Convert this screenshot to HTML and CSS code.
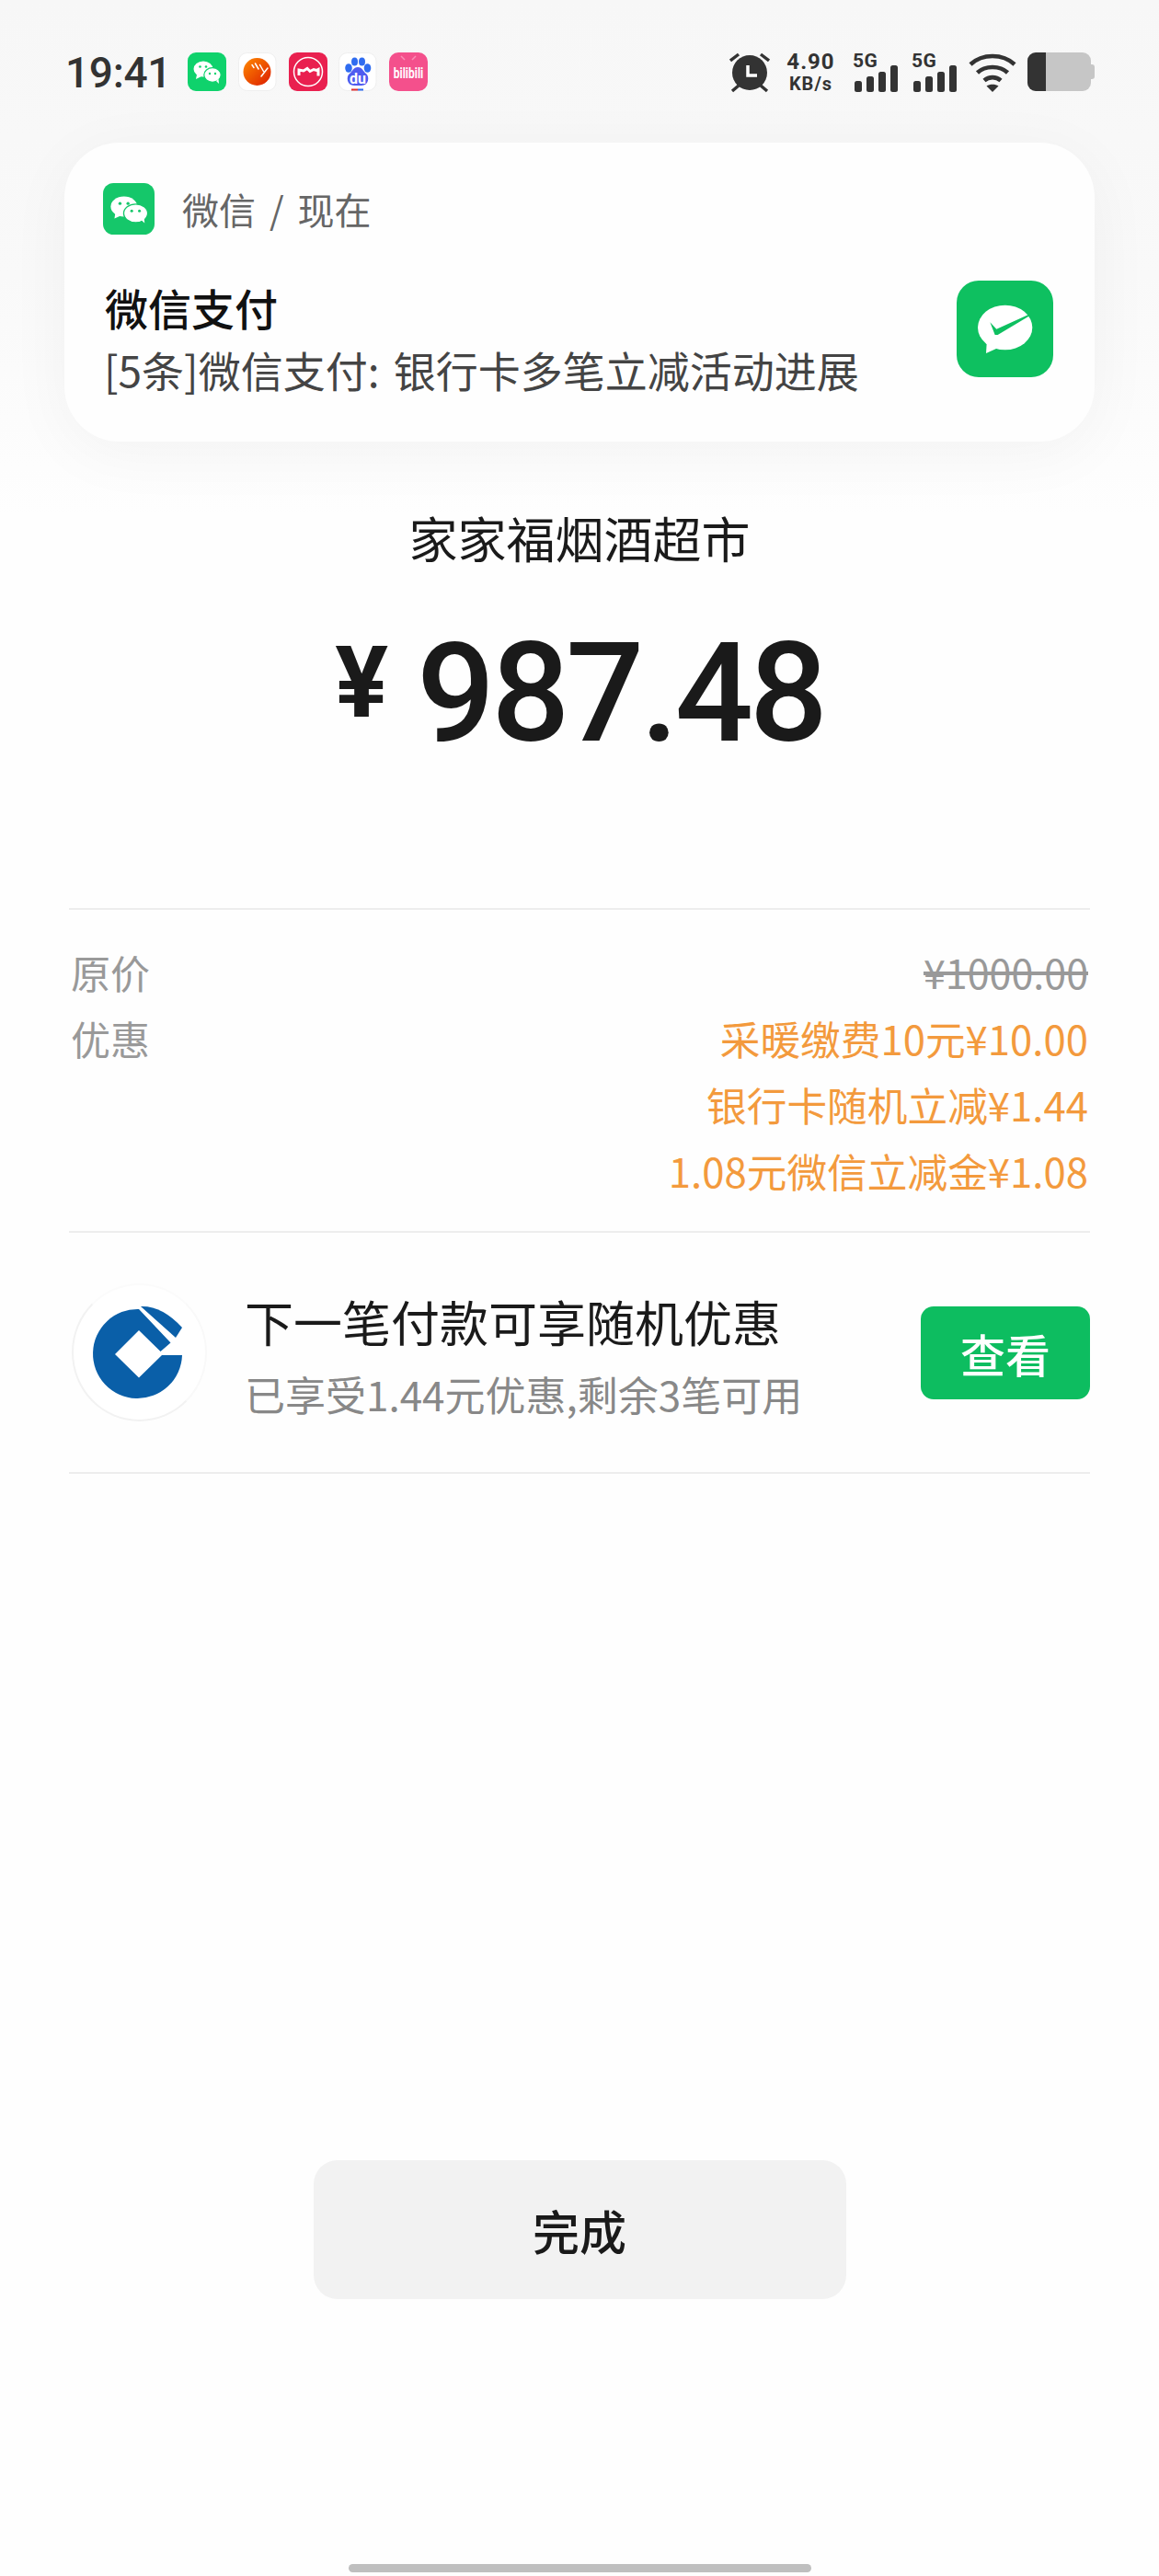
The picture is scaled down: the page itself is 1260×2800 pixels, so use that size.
FILE: index.html
```html
<!DOCTYPE html>
<html lang="zh-CN">
<head>
<meta charset="utf-8">
<title>微信支付</title>
<link rel="stylesheet" href="styles.css">
</head>
<body>
<div class="page">
  <header class="status">
    <div class="time">19:41</div>
    <div class="apps">
      <svg class="app" viewBox="0 0 42 42"><rect width="42" height="42" rx="9" fill="#0fd26c"/><ellipse cx="17" cy="18" rx="10.500" ry="8.600" fill="#fff"/><path d="M10 24l-1 5 6-3z" fill="#fff"/><ellipse cx="27" cy="24.500" rx="9.200" ry="7.800" fill="#fff" stroke="#0fd26c" stroke-width="1.200"/><path d="M31 31l3 3-.5-5z" fill="#fff"/><circle cx="13.500" cy="15.500" r="1.300" fill="#0fd26c"/><circle cx="20" cy="15.500" r="1.300" fill="#0fd26c"/><circle cx="24" cy="23" r="1.200" fill="#0fd26c"/><circle cx="30" cy="23" r="1.200" fill="#0fd26c"/></svg>
      <svg class="app" viewBox="0 0 42 42"><rect x=".5" y=".5" width="40.500" height="41" rx="9" fill="#fff" stroke="#efefef"/><defs><linearGradient id="og" x1="0" y1="0" x2="1" y2="1"><stop offset="0" stop-color="#ff8a00"/><stop offset="1" stop-color="#dc1c00"/></linearGradient></defs><circle cx="20.500" cy="21" r="15" fill="url(#og)"/><path d="M15 13.500l2 3M18.500 12l3.500 6M23.500 13.500l4 7M32 17l-7 9" stroke="#fff" stroke-width="1.500" stroke-linecap="round" fill="none"/></svg>
      <svg class="app" viewBox="0 0 42 42"><rect width="42" height="42" rx="9" fill="#e9204f"/><circle cx="21" cy="21" r="15.500" fill="none" stroke="#fff" stroke-width="1.500"/><path d="M11 25v-6l5 1 4-2.500 3 3 4-2 3 1 2-1v7" fill="none" stroke="#fff" stroke-width="3"/></svg>
      <svg class="app" viewBox="0 0 42 42"><rect x=".5" y=".5" width="40.500" height="41" rx="9" fill="#fff" stroke="#efefef"/><ellipse cx="11" cy="17" rx="3.800" ry="4.800" fill="#2f6cf0"/><ellipse cx="17.500" cy="10" rx="3.500" ry="4.500" fill="#2f6cf0"/><ellipse cx="25.500" cy="10" rx="3.500" ry="4.500" fill="#2f6cf0"/><ellipse cx="31.500" cy="17" rx="3.800" ry="4.800" fill="#2f6cf0"/><path d="M21 16c5 0 6 5 9 7 4 3 3 13-5 13h-8c-8 0-9-10-5-13 3-2 4-7 9-7z" fill="#4f5cf0"/><rect x="14" y="39.500" width="7" height="2" fill="#e03030"/><rect x="21" y="39.500" width="6" height="2" fill="#2f6cf0"/><text class="du" x="21" y="34" text-anchor="middle">du</text></svg>
      <svg class="app" viewBox="0 0 42 42"><rect width="42" height="42" rx="10" fill="#f4508c"/><path d="M13 4l4 4M29 4l-4 4" stroke="#f98fb6" stroke-width="1.500"/><text class="bili" transform="translate(21 28) scale(1 1.350)" text-anchor="middle">bilibili</text></svg>
    </div>
    <div class="sys">
      <svg class="alarm" viewBox="0 0 44 44"><circle cx="22" cy="22" r="19" fill="#333"/><path d="M1 9L10 2M43 9L34 2M3 42l7-6M41 42l-7-6" stroke="#333" stroke-width="3.400" fill="none"/><path d="M20 14v11h10" stroke="#fff" stroke-width="3.500" fill="none"/></svg>
      <div class="speed"><span class="speed-num">4.90</span><span class="speed-unit">KB/s</span></div>
      <div class="signal"><span class="g">5G</span><svg class="bars" viewBox="0 0 47 29"><rect x="0" y="17" width="8" height="12" rx="2.500"/><rect x="13" y="12" width="8" height="17" rx="2.500"/><rect x="26" y="7" width="8" height="22" rx="2.500"/><rect x="39" y="0" width="8" height="29" rx="2.500"/></svg></div>
      <div class="signal"><span class="g">5G</span><svg class="bars" viewBox="0 0 47 29"><rect x="0" y="17" width="8" height="12" rx="2.500"/><rect x="13" y="12" width="8" height="17" rx="2.500"/><rect x="26" y="7" width="8" height="22" rx="2.500"/><rect x="39" y="0" width="8" height="29" rx="2.500"/></svg></div>
      <svg class="wifi" viewBox="0 0 52 43"><path d="M2 13C15 1 37 1 50 13M9.500 22C18 14 34 14 42.500 22M17 30.500C22 26 30 26 35 30.500" fill="none" stroke="#333" stroke-width="4.600"/><path d="M19.500 36.500C23 34 29 34 32.500 36.500L26 43z" fill="#333"/></svg>
      <div class="battery"><div class="bat-body"><div class="bat-fill"></div></div><div class="bat-nub"></div></div>
    </div>
  </header>

  <section class="notice">
    <div class="notice-main">
      <div class="notice-head">
        <svg class="wx" viewBox="0 0 167 167"><rect width="167" height="167" rx="34" fill="#15c76a"/><ellipse cx="68" cy="76" rx="43" ry="33" fill="#fff"/><path d="M40 98l-3 17 22-10z" fill="#fff"/><ellipse cx="106" cy="98" rx="39" ry="30" fill="#fff" stroke="#15c76a" stroke-width="4"/><path d="M124 120l11 10-2-18z" fill="#fff"/><circle cx="55" cy="66" r="5" fill="#15c76a"/><circle cx="81" cy="66" r="5" fill="#15c76a"/><circle cx="93" cy="90" r="4.500" fill="#15c76a"/><circle cx="118" cy="90" r="4.500" fill="#15c76a"/></svg>
        <span class="notice-src">微信 / 现在</span>
      </div>
      <div class="notice-title">微信支付</div>
      <div class="notice-text">[5条]微信支付: 银行卡多笔立减活动进展</div>
    </div>
    <svg class="pay" viewBox="0 0 315 315"><rect width="315" height="315" rx="72" fill="#0ec060"/><ellipse cx="158" cy="153" rx="89" ry="73" fill="#fff"/><path d="M98 205l-2 32 38-17z" fill="#fff"/><path d="M109 136l21 22 106-48 2 5-104 62-9 0z" fill="#0ec060"/></svg>
  </section>

  <div class="merchant">家家福烟酒超市</div>
  <div class="amount"><span class="yen">¥</span><span class="num">987.48</span></div>

  <section class="prices">
    <div class="price-row"><span class="label">原价</span><span class="origin">¥1000.00</span></div>
    <div class="price-row"><span class="label">优惠</span><span class="off">采暖缴费10元¥10.00</span></div>
    <div class="price-row price-end"><span class="off">银行卡随机立减¥1.44</span></div>
    <div class="price-row price-end"><span class="off">1.08元微信立减金¥1.08</span></div>
  </section>

  <section class="promo">
    <div class="bank">
      <svg class="ccb" viewBox="0 0 147 150"><path d="M73 28L107.500 64.500 96.500 74 73 51 47 77 73 102.500 98 78 120 78A48.500 48.500 0 1 1 73 28Z" fill="#0a5fa8"/><path d="M75 25Q98 24 120 48L113 59Z" fill="#0a5fa8"/></svg>
    </div>
    <div class="promo-text">
      <div class="promo-title">下一笔付款可享随机优惠</div>
      <div class="promo-sub">已享受1.44元优惠,剩余3笔可用</div>
    </div>
    <button class="view">查看</button>
  </section>

  <div class="spacer"></div>
  <button class="done">完成</button>
  <div class="home"></div>
</div>
</body>
</html>
```

FILE: styles.css
```css
* { box-sizing: border-box; }
html, body { margin: 0; padding: 0; background: #fff; }
body { font-family: "Noto Sans CJK SC", "Noto Sans", sans-serif; color: #1a1a1a; }
.page {
  width: 1260px;
  height: 2800px;
  display: flex;
  flex-direction: column;
  background: linear-gradient(#f7f7f7 0, #f9f9f9 300px, #fefefe 560px, #fefefe 100%);
}

.status { height: 155px; padding: 57px 70px 0 71px; display: flex; align-items: flex-start; }
.time { font: 500 46px/44px Roboto, sans-serif; color: #333; width: 133px; letter-spacing: -.3px; }
.apps { display: flex; gap: 12.750px; }
.app { width: 42px; height: 42px; display: block; }
.du { font: 700 16px Roboto, sans-serif; fill: #fff; }
.bili { font: 700 12px Roboto, sans-serif; fill: #fff; }
.sys { margin-left: auto; display: flex; align-items: flex-start; }
.alarm { width: 44px; height: 44px; display: block; }
.speed { width: 55px; margin-left: 17px; display: flex; flex-direction: column; align-items: center; color: #333; font-family: Roboto, sans-serif; font-weight: 700; }
.speed-num { font-size: 24px; line-height: 20px; letter-spacing: 1px; }
.speed-unit { margin-top: 4px; font-size: 20px; line-height: 20px; letter-spacing: 1px; }
.signal { position: relative; width: 47px; height: 43px; margin-left: 20px; }
.signal + .signal { margin-left: 17px; }
.g { display: block; margin-left: -2px; font: 700 21px/18px Roboto, sans-serif; letter-spacing: .5px; color: #333; }
.bars { position: absolute; left: 0; bottom: 0; width: 47px; height: 29px; fill: #333; display: block; }
.wifi { width: 52px; height: 43px; margin-left: 13px; display: block; }
.battery { display: flex; align-items: center; margin-left: 12px; }
.bat-body { width: 69px; height: 42px; border-radius: 9px; background: #c6c6c6; overflow: hidden; }
.bat-fill { width: 20px; height: 100%; background: #333; }
.bat-nub { width: 4px; height: 16px; background: #c6c6c6; border-radius: 0 3px 3px 0; }

.notice {
  margin: 0 70px;
  height: 325px;
  padding: 44px 45px 0 42px;
  background: #fefefe;
  border-radius: 60px;
  box-shadow: 0 12px 70px rgba(0, 0, 0, .045);
  display: flex;
  justify-content: space-between;
}
.notice-head { display: flex; align-items: center; height: 56px; }
.wx { width: 56px; height: 56px; display: block; }
.notice-src { margin-left: 30px; font-size: 40px; line-height: 56px; color: #666; word-spacing: 6px; }
.notice-title { margin: 48px 0 0 2px; font-size: 47px; line-height: 62px; font-weight: 500; color: #111; }
.notice-text { margin: 5px 0 0 1px; font-size: 46px; line-height: 62px; color: #444; white-space: nowrap; word-spacing: 5px; }
.pay { width: 105px; height: 105px; margin-top: 106px; display: block; }

.merchant { margin-top: 69px; text-align: center; font-size: 53px; line-height: 70px; color: #1a1a1a; }
.amount { margin-top: 50px; height: 170px; display: flex; justify-content: center; align-items: center; font-family: Roboto, sans-serif; color: #1a1a1a; }
.yen { font-size: 108px; font-weight: 700; line-height: 108px; margin: -24px 31px 0 0; }
.num { font-size: 150px; font-weight: 500; line-height: 170px; letter-spacing: -4.200px; }

.prices { margin: 148px 75px 0; border-top: 2px solid #ededed; border-bottom: 2px solid #ededed; padding: 31px 2px 30px 2px; }
.price-row { height: 72px; line-height: 72px; font-size: 43px; display: flex; justify-content: space-between; }
.price-end { justify-content: flex-end; }
.label { color: #999; }
.origin { color: #999; text-decoration: line-through; }
.off { color: #f39a3d; font-size: 43.700px; }

.promo { margin: 0 75px; height: 262px; border-bottom: 2px solid #ededed; display: flex; align-items: center; }
.bank { width: 147px; height: 150px; margin-left: 3px; border-radius: 50%; background: #fff; border: 2px solid #f2f2f2; border-top-color: #fbfbfb; border-right-color: #f9f9f9; display: flex; align-items: center; justify-content: center; }
.ccb { width: 147px; height: 150px; display: block; flex: none; }
.promo-text { margin-left: 41px; padding-top: 10px; flex: 1; }
.promo-title { font-size: 53px; line-height: 70px; color: #1a1a1a; }
.promo-sub { margin-top: 9px; font-size: 44px; line-height: 70px; color: #888; }
.view { width: 184px; height: 101px; padding: 0; border: 0; border-radius: 14px; background: #0dbd60; color: #fff; font: 500 49px "Noto Sans CJK SC", sans-serif; }

.spacer { flex: 1; }
.done { align-self: center; width: 579px; height: 151px; padding: 0; border: 0; border-radius: 26px; background: #f2f2f2; color: #1a1a1a; font: 500 51px "Noto Sans CJK SC", sans-serif; }
.home { align-self: center; width: 503px; height: 9px; margin: 288px 0 4px; border-radius: 5px; background: #bfbfbf; }
```
